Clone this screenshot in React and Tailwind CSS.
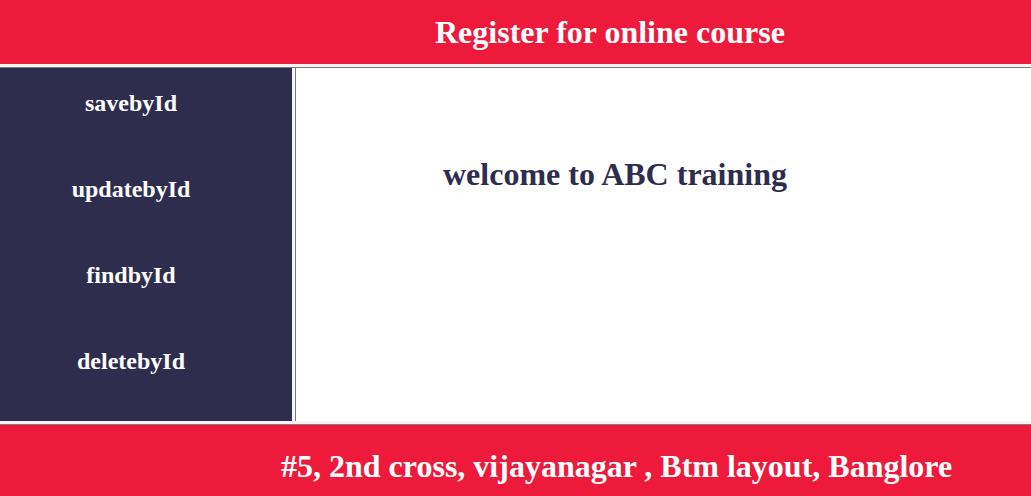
export default function App() {
  const links = ['savebyId', 'updatebyId', 'findbyId', 'deletebyId']

  return (
    <div className="flex h-[496px] w-[1031px] flex-col overflow-hidden bg-[#eeeeee] font-['Liberation_Serif',serif] font-bold">
      <header className="flex h-[64px] items-center bg-[#ed1a3b] pl-[435px] text-[32px] leading-[36px] text-white">
        Register for online course
      </header>

      <div className="h-[3px] bg-[#f3f3f3]" />
      <div className="h-px bg-[#7a7a7a]" />

      <div className="flex h-[353px]">
        <nav className="w-[292px] bg-[#2e2d4d] text-white">
          <ul className="flex w-[262px] flex-col items-center pt-[22px] text-[24px] leading-[26px]">
            {links.map((item, i) => (
              <li key={item} className={i === 0 ? '' : 'mt-[60px]'}>
                {item}
              </li>
            ))}
          </ul>
        </nav>
        <div className="w-[3px] bg-[#f3f3f3]" />
        <div className="w-px bg-[#7a7a7a]" />
        <main className="flex-1 bg-white pl-[147px] pt-[88px] text-[32px] leading-[36px] text-[#2e2d4d]">
          welcome to ABC training
        </main>
      </div>

      <div className="h-[3px] bg-[#f3f3f3]" />
      <div className="h-px bg-[#7a7a7a]" />

      <footer className="flex flex-1 items-center bg-[#ed1a3b] pl-[281px] pt-[10px] text-[32px] leading-[36px] text-white">
        #5, 2nd cross, vijayanagar , Btm layout, Banglore
      </footer>
    </div>
  )
}
